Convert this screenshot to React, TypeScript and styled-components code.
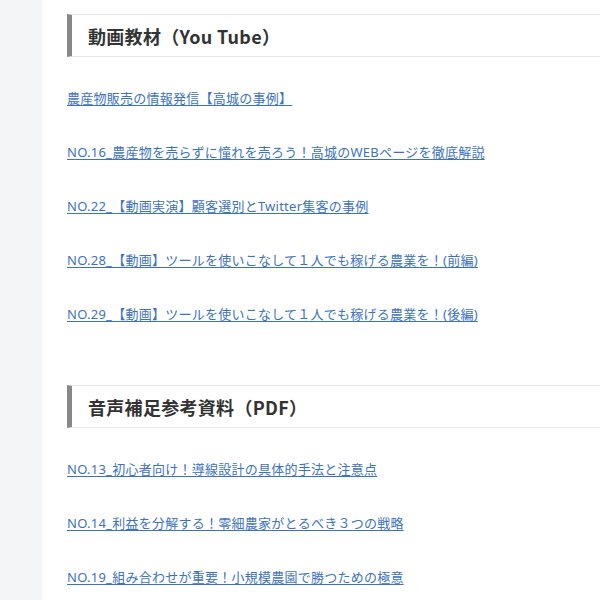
import styled, { createGlobalStyle } from "styled-components";

const sections = [
  {
    title: "動画教材（You Tube）",
    links: [
      "農産物販売の情報発信【高城の事例】",
      "NO.16_農産物を売らずに憧れを売ろう！高城のWEBページを徹底解説",
      "NO.22_【動画実演】顧客選別とTwitter集客の事例",
      "NO.28_【動画】ツールを使いこなして１人でも稼げる農業を！(前編)",
      "NO.29_【動画】ツールを使いこなして１人でも稼げる農業を！(後編)",
    ],
  },
  {
    title: "音声補足参考資料（PDF）",
    links: [
      "NO.13_初心者向け！導線設計の具体的手法と注意点",
      "NO.14_利益を分解する！零細農家がとるべき３つの戦略",
      "NO.19_組み合わせが重要！小規模農園で勝つための極意",
    ],
  },
];

export default function App() {
  return (
    <>
      <GlobalStyle />
      <PageWrapper>
        <Sidebar />
        <Main>
          {sections.map((section) => (
            <Section key={section.title}>
              <Heading>{section.title}</Heading>
              <LinkList>
                {section.links.map((link) => (
                  <LinkRow key={link}>
                    <a href="#">{link}</a>
                  </LinkRow>
                ))}
              </LinkList>
            </Section>
          ))}
        </Main>
      </PageWrapper>
    </>
  );
}

const GlobalStyle = createGlobalStyle`
  body {
    margin: 0;
    background: #ffffff;
    font-family: "Noto Sans", "Noto Sans CJK JP", sans-serif;
  }
`;

const PageWrapper = styled.div`
  display: flex;
  width: 100%;
  min-height: 600px;
  overflow: hidden;
`;

const Sidebar = styled.div`
  flex: 0 0 42px;
  background: #f4f5f7;
`;

const Main = styled.div`
  flex: 1;
  display: flex;
  flex-direction: column;
  gap: 44px;
  padding: 14px 0 0 25px;
  background: #ffffff;
`;

const Section = styled.div`
  display: flex;
  flex-direction: column;
  gap: 14px;
`;

const Heading = styled.h2`
  margin: 0;
  box-sizing: border-box;
  height: 43px;
  display: flex;
  align-items: center;
  padding-left: 16px;
  border-top: 1px solid #e8e8e8;
  border-bottom: 1px solid #e8e8e8;
  border-left: 5px solid #888888;
  font-family: "Noto Sans CJK JP", sans-serif;
  font-size: 18px;
  font-weight: 700;
  letter-spacing: 0.3px;
  color: #333333;
`;

const LinkList = styled.div`
  display: flex;
  flex-direction: column;
`;

const LinkRow = styled.div`
  height: 54px;
  display: flex;
  align-items: center;

  a {
    font-size: 13px;
    line-height: 18px;
    letter-spacing: 0.25px;
    color: #3d72c0;
    text-decoration: underline;
    text-underline-offset: 2px;
    white-space: nowrap;
  }
`;
